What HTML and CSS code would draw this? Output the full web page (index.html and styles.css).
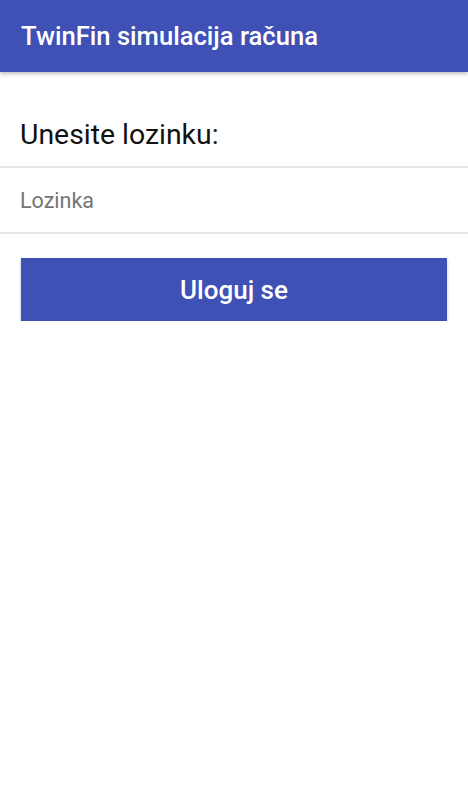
FILE: index.html
```html
<!DOCTYPE html>
<html>
<head>
    <meta charset="utf-8">
    <title>TwinFin simulacija računa</title>
    <link rel="stylesheet" href="styles.css">
</head>
<body>
    <div class="toolbar">
        <h1>TwinFin simulacija računa</h1>
    </div>
    <div class="content">
        <p class="prompt">Unesite lozinku:</p>
        <input type="password" class="password" placeholder="Lozinka">
        <div class="actions">
            <button class="login">Uloguj se</button>
        </div>
    </div>
</body>
</html>
```

FILE: styles.css
```css
body {
    margin: 0;
    font-family: Roboto, Arial, sans-serif;
    background-color: #fff;
}

.toolbar {
    height: 72px;
    background-color: #3f51b5;
    display: flex;
    align-items: center;
    padding: 0 21px;
    box-shadow: 0 2px 4px rgba(0, 0, 0, 0.25);
}

.toolbar h1 {
    margin: 0;
    color: #fff;
    font-size: 25.6px;
    font-weight: 500;
}

.content {
    padding-top: 32px;
}

.prompt {
    margin: 0 0 0 20px;
    font-size: 28.4px;
    line-height: 62px;
    color: #111;
}

.password {
    display: block;
    box-sizing: border-box;
    width: 100%;
    height: 68px;
    margin: 0;
    padding: 0 20px;
    border: none;
    border-top: 2px solid #e6e6e6;
    border-bottom: 2px solid #e6e6e6;
    font-family: Roboto, Arial, sans-serif;
    font-size: 21.5px;
    outline: none;
}

.password::placeholder {
    color: #757575;
}

.actions {
    padding: 24px 21px 0;
}

.login {
    width: 100%;
    height: 63px;
    border: none;
    background-color: #3f51b5;
    color: #fff;
    font-family: Roboto, Arial, sans-serif;
    font-size: 26px;
    font-weight: 500;
    box-shadow: 0 2px 3px rgba(0, 0, 0, 0.25);
    cursor: pointer;
}
```
